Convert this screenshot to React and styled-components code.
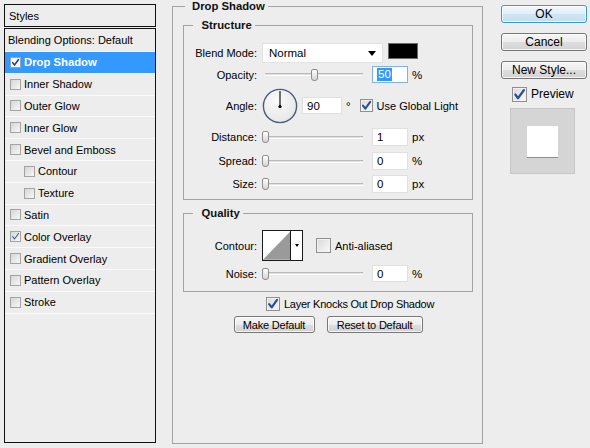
import React from 'react';
import styled, { createGlobalStyle } from 'styled-components';

const GlobalStyle = createGlobalStyle`
  html, body { margin: 0; padding: 0; background: #ededed; }
  body { font-family: "Liberation Sans", Arial, sans-serif; font-size: 11px; color: #000; }
  * { box-sizing: border-box; }
`;

const Window = styled.div`
  width: 590px;
  height: 448px;
  display: flex;
  align-items: flex-start;
  background: #ededed;
  overflow: hidden;
`;

/* ---------- Left styles list ---------- */
const StylesPanel = styled.div`
  width: 152px;
  margin: 4px 0 0 4px;
  display: flex;
  flex-direction: column;
  gap: 1px;
`;

const PanelHeader = styled.div`
  height: 23px;
  border: 1px solid #111;
  padding-left: 4px;
  display: flex;
  align-items: center;
`;

const StyleList = styled.div`
  height: 415px;
  border: 1px solid #111;
  display: flex;
  flex-direction: column;
`;

const StyleRow = styled.div`
  height: ${p => p.$h}px;
  flex: none;
  display: flex;
  align-items: center;
  gap: 3px;
  padding-left: ${p => p.$indent}px;
  border-bottom: 1px solid #f9f9f9;
  background: ${p => (p.$selected ? '#3399ff' : 'transparent')};
  color: ${p => (p.$selected ? '#fff' : '#000')};
  font-weight: ${p => (p.$selected ? 'bold' : 'normal')};
  font-size: ${p => (p.$selected ? '11.3px' : '11px')};
`;

const ListBox = styled.span`
  width: 11px;
  height: 11px;
  flex: none;
  border: 1px solid ${p => (p.$light ? '#9aa4b4' : '#a3a3a3')};
  background: ${p => (p.$light ? '#f4f6f8' : 'linear-gradient(135deg, #d6d6d6, #f7f7f7)')};
  display: flex;
  align-items: center;
  justify-content: center;
`;

/* ---------- Checkbox ---------- */
const CheckBoxBox = styled.span`
  width: ${p => p.$size}px;
  height: ${p => p.$size}px;
  flex: none;
  border: 1px solid #8e8f8f;
  background: linear-gradient(135deg, #d9d9d9, #f9f9f9);
  box-shadow: inset 0 0 0 1px #f2f2f2;
  display: flex;
  align-items: center;
  justify-content: center;
`;

const Tick = ({ size = 11, color = '#2b4c9b', w = 2 }) => (
  <svg width={size} height={size} viewBox="0 0 11 11">
    <path d="M2 5.6 L4.3 8.6 L9.2 1.8" fill="none" stroke={color} strokeWidth={w} strokeLinecap="round" strokeLinejoin="round" />
  </svg>
);

const CheckBox = ({ checked, size = 13 }) => (
  <CheckBoxBox $size={size}>{checked && <Tick size={size - 2} />}</CheckBoxBox>
);

/* ---------- Group boxes ---------- */
const MainFrame = styled.fieldset`
  width: 311px;
  height: 444px;
  margin: 0 0 0 16px;
  padding: 0 9px 0 10px;
  border: 1px solid #a3a3a3;
  min-width: 0;
  display: block;
`;

const FrameLegend = styled.legend`
  font-weight: bold;
  font-size: 11.3px;
  line-height: 13px;
  padding: 0 3px 0 ${p => p.$pl}px;
  margin-left: ${p => p.$ml}px;
  color: #111;
`;

const Group = styled.fieldset`
  margin: ${p => p.$mt}px 0 0 0;
  padding: ${p => p.$pt}px 0 ${p => p.$pb}px 0;
  border: 1px solid #a3a3a3;
  min-width: 0;
  display: block;
`;

const FieldRow = styled.div`
  display: flex;
  align-items: center;
  height: ${p => p.$h}px;
  margin-top: ${p => p.$mt || 0}px;
`;

const FieldLabel = styled.span`
  width: 73px;
  margin-right: 5px;
  text-align: right;
  flex: none;
  white-space: nowrap;
`;

const SelectBox = styled.div`
  width: 121px;
  height: 20px;
  align-self: flex-start;
  background: #fff;
  border: 1px solid #e2e2e2;
  display: flex;
  align-items: center;
  justify-content: space-between;
  padding: 0 6px 0 6px;
  font-size: 11.5px;
`;

const SelectArrow = styled.span`
  width: 0;
  height: 0;
  border-left: 4px solid transparent;
  border-right: 4px solid transparent;
  border-top: 5px solid #000;
`;

const ColorSwatch = styled.div`
  width: 30px;
  height: 16px;
  margin-left: 5px;
  align-self: flex-start;
  background: #000;
  border: 1px solid #6b6b6b;
`;

const SliderWrap = styled.div`
  width: 104px;
  height: 12px;
  flex: none;
  position: relative;
  display: flex;
  align-items: center;
  padding: 0 3px;
`;

const SliderTrack = styled.div`
  width: 100%;
  height: 3px;
  border-top: 1px solid #b9b9b9;
  border-bottom: 1px solid #ffffff;
  background: #e2e2e2;
`;

const SliderThumb = styled.div`
  position: absolute;
  top: 0;
  width: 7px;
  height: 12px;
  margin-left: -3.5px;
  border: 1px solid #8d8d8d;
  border-radius: 2px 2px 3px 3px;
  background: linear-gradient(#ffffff, #d4d4d4);
`;

const Slider = ({ value }) => (
  <SliderWrap>
    <SliderTrack />
    <SliderThumb style={{ left: `${3 + value * 0.98}px` }} />
  </SliderWrap>
);

const NumInput = styled.div`
  width: ${p => p.$w || 36}px;
  height: ${p => p.$h || 18}px;
  margin-left: ${p => p.$ml}px;
  flex: none;
  background: #fff;
  border: 1px solid ${p => (p.$focus ? '#7fb3e6' : '#e0e0e0')};
  display: flex;
  align-items: center;
  padding-left: 4px;
  font-size: 11.5px;
`;

const Highlight = styled.span`
  background: #3399ff;
  color: #fff;
  padding: 0 1px;
  line-height: 13px;
`;

const Unit = styled.span`
  margin-left: ${p => p.$ml || 4}px;
  font-size: 11.5px;
`;

const InlineCheck = styled.label`
  display: flex;
  align-items: center;
  gap: 4px;
  margin-left: ${p => p.$ml}px;
  white-space: nowrap;
  letter-spacing: ${p => p.$ls || 0}px;
`;

const Dial = () => (
  <svg width="36" height="36" viewBox="0 0 36 36" style={{ flex: 'none' }}>
    <defs>
      <radialGradient id="dialg" cx="40%" cy="35%" r="70%">
        <stop offset="0%" stopColor="#fbfbfb" />
        <stop offset="100%" stopColor="#e6e6e6" />
      </radialGradient>
    </defs>
    <circle cx="18" cy="18" r="16.6" fill="url(#dialg)" stroke="#4d5a7c" strokeWidth="1.4" />
    <line x1="18" y1="18.5" x2="18" y2="3" stroke="#000" strokeWidth="1.1" />
    <circle cx="18" cy="18.5" r="1.6" fill="#000" />
  </svg>
);

const ContourPicker = styled.div`
  width: 41px;
  height: 31px;
  flex: none;
  border: 1px solid #1a1a1a;
  display: flex;
  background: #fff;
`;

const ContourArrowPart = styled.div`
  width: 12px;
  border-left: 1px solid #1a1a1a;
  display: flex;
  align-items: center;
  justify-content: center;
`;

const SmallArrow = styled.span`
  width: 0;
  height: 0;
  border-left: 2.5px solid transparent;
  border-right: 2.5px solid transparent;
  border-top: 3px solid #000;
`;

const KnockRow = styled.div`
  display: flex;
  align-items: center;
  height: 14px;
  margin-top: 5px;
  padding-left: 83px;
`;

const ButtonRow = styled.div`
  display: flex;
  justify-content: center;
  gap: 12px;
  margin-top: 5px;
`;

const Button = styled.button`
  width: ${p => p.$w}px;
  height: ${p => p.$h}px;
  margin-top: ${p => p.$mt || 0}px;
  padding: 0;
  flex: none;
  font-family: "Liberation Sans", Arial, sans-serif;
  font-size: ${p => p.$fs}px;
  letter-spacing: ${p => p.$ls || 0}px;
  color: #000;
  border: 1px solid ${p => (p.$primary ? '#3d9ad8' : '#777')};
  border-radius: 3px;
  background: ${p =>
    p.$primary
      ? 'linear-gradient(#eef7fd, #e0eff9 50%, #cfe5f4 51%, #c4dff1)'
      : 'linear-gradient(#f6f6f6, #ececec 50%, #dedede 51%, #d2d2d2)'};
  box-shadow: inset 0 0 0 1px rgba(255, 255, 255, 0.75);
  display: flex;
  align-items: center;
  justify-content: center;
`;

/* ---------- Right column ---------- */
const SideColumn = styled.div`
  width: 86px;
  margin: 5px 0 0 18px;
  display: flex;
  flex-direction: column;
`;

const PreviewCheck = styled.label`
  display: flex;
  align-items: center;
  gap: 4px;
  height: 14px;
  margin: 8px 0 0 11px;
  font-size: 12px;
`;

const PreviewBox = styled.div`
  width: 65px;
  height: 66px;
  margin: 7px 0 0 9px;
  background: #d5d5d5;
  border: 1px solid #c6c6c6;
  display: flex;
  align-items: center;
  justify-content: center;
`;

const PreviewSwatch = styled.div`
  width: 31px;
  height: 31px;
  background: #fff;
  box-shadow: 0 1px 0 #8d8d8d;
`;

const styleItems = [
  { name: 'Drop Shadow', checked: true, selected: true },
  { name: 'Inner Shadow' },
  { name: 'Outer Glow' },
  { name: 'Inner Glow' },
  { name: 'Bevel and Emboss' },
  { name: 'Contour', sub: true },
  { name: 'Texture', sub: true },
  { name: 'Satin' },
  { name: 'Color Overlay', checked: true },
  { name: 'Gradient Overlay' },
  { name: 'Pattern Overlay' },
  { name: 'Stroke' },
];

export default function App() {
  return (
    <>
      <GlobalStyle />
      <Window>
        <StylesPanel>
          <PanelHeader>Styles</PanelHeader>
          <StyleList>
            <StyleRow $h={23} $indent={3}>Blending Options: Default</StyleRow>
            {styleItems.map(item => (
              <StyleRow key={item.name} $h={21.8} $indent={item.sub ? 19 : 5} $selected={item.selected}>
                <ListBox $light={item.selected}>
                  {item.checked && <Tick size={9} w={item.selected ? 1.8 : 1.3} color={item.selected ? '#233b7a' : '#46587e'} />}
                </ListBox>
                {item.name}
              </StyleRow>
            ))}
          </StyleList>
        </StylesPanel>

        <MainFrame>
          <FrameLegend $ml={2} $pl={7}>Drop Shadow</FrameLegend>
          <Group $mt={5.5} $pt={11.5} $pb={6}>
            <FrameLegend $ml={9} $pl={8.5}>Structure</FrameLegend>
            <FieldRow $h={20}>
              <FieldLabel>Blend Mode:</FieldLabel>
              <SelectBox>
                Normal
                <SelectArrow />
              </SelectBox>
              <ColorSwatch />
            </FieldRow>
            <FieldRow $h={17} $mt={3}>
              <FieldLabel>Opacity:</FieldLabel>
              <Slider value={50} />
              <NumInput $ml={6} $h={17} $focus>
                <Highlight>50</Highlight>
              </NumInput>
              <Unit>%</Unit>
            </FieldRow>
            <FieldRow $h={35} $mt={5}>
              <FieldLabel>Angle:</FieldLabel>
              <Dial />
              <NumInput $ml={4} $w={40} $h={17}>90</NumInput>
              <Unit>°</Unit>
              <InlineCheck $ml={9}>
                <CheckBox checked />
                Use Global Light
              </InlineCheck>
            </FieldRow>
            <FieldRow $h={18} $mt={5}>
              <FieldLabel>Distance:</FieldLabel>
              <Slider value={0} />
              <NumInput $ml={6}>1</NumInput>
              <Unit>px</Unit>
            </FieldRow>
            <FieldRow $h={18} $mt={6}>
              <FieldLabel>Spread:</FieldLabel>
              <Slider value={0} />
              <NumInput $ml={6}>0</NumInput>
              <Unit>%</Unit>
            </FieldRow>
            <FieldRow $h={18} $mt={5}>
              <FieldLabel>Size:</FieldLabel>
              <Slider value={0} />
              <NumInput $ml={6}>0</NumInput>
              <Unit>px</Unit>
            </FieldRow>
          </Group>

          <Group $mt={6.5} $pt={10.5} $pb={9}>
            <FrameLegend $ml={9} $pl={8.5}>Quality</FrameLegend>
            <FieldRow $h={31}>
              <FieldLabel>Contour:</FieldLabel>
              <ContourPicker>
                <svg width="28" height="29" viewBox="0 0 28 29">
                  <rect x="0" y="0" width="28" height="29" fill="#fff" />
                  <polygon points="0,29 28,0 28,29" fill="#9a9a9a" />
                </svg>
                <ContourArrowPart>
                  <SmallArrow />
                </ContourArrowPart>
              </ContourPicker>
              <InlineCheck $ml={13}>
                <CheckBox size={15} />
                Anti-aliased
              </InlineCheck>
            </FieldRow>
            <FieldRow $h={17} $mt={4}>
              <FieldLabel>Noise:</FieldLabel>
              <Slider value={0} />
              <NumInput $ml={6} $h={17}>0</NumInput>
              <Unit>%</Unit>
            </FieldRow>
          </Group>

          <KnockRow>
            <InlineCheck $ml={0} $ls={-0.25}>
              <CheckBox checked size={14} />
              Layer Knocks Out Drop Shadow
            </InlineCheck>
          </KnockRow>
          <ButtonRow>
            <Button $w={81} $h={17} $fs={11} $ls={-0.2}>Make Default</Button>
            <Button $w={96} $h={17} $fs={11} $ls={-0.2}>Reset to Default</Button>
          </ButtonRow>
        </MainFrame>

        <SideColumn>
          <Button $primary $w={86} $h={18} $fs={12}>OK</Button>
          <Button $w={86} $h={18} $fs={12} $mt={10}>Cancel</Button>
          <Button $w={86} $h={18} $fs={12} $mt={10}>New Style...</Button>
          <PreviewCheck>
            <CheckBox checked size={15} />
            Preview
          </PreviewCheck>
          <PreviewBox>
            <PreviewSwatch />
          </PreviewBox>
        </SideColumn>
      </Window>
    </>
  );
}
